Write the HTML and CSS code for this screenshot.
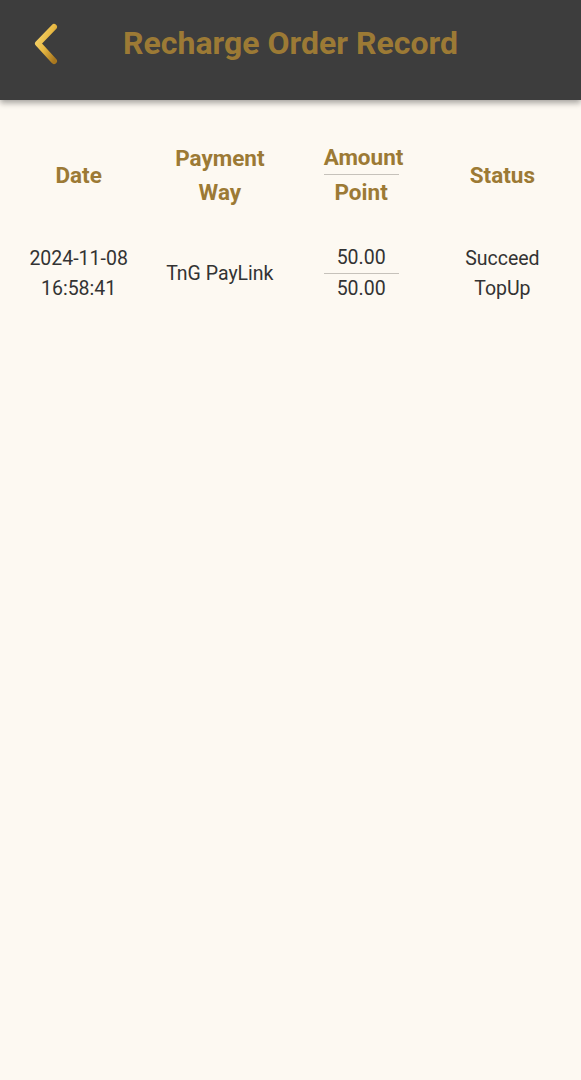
FILE: index.html
```html
<!DOCTYPE html>
<html>
<head>
<meta charset="utf-8">
<link rel="stylesheet" href="styles.css">
</head>
<body>
<header class="topbar">
  <a class="back" href="#">
    <svg width="30" height="44" viewBox="0 0 30 44">
      <defs>
        <linearGradient id="g" x1="0" y1="0" x2="1" y2="1">
          <stop offset="0" stop-color="#f7d873"/>
          <stop offset="0.5" stop-color="#e8b943"/>
          <stop offset="1" stop-color="#a8771f"/>
        </linearGradient>
      </defs>
      <polyline points="22,5 6,21.5 22,39" fill="none" stroke="url(#g)" stroke-width="6" stroke-linecap="round" stroke-linejoin="round"/>
    </svg>
  </a>
  <h1 class="title">Recharge Order Record</h1>
  <span class="spacer"></span>
</header>
<main class="content">
  <div class="table">
    <div class="row head">
      <div class="cell">Date</div>
      <div class="cell">Payment<br>Way</div>
      <div class="cell">
        <div class="pair"><span class="top">Amount</span><span>Point</span></div>
      </div>
      <div class="cell">Status</div>
    </div>
    <div class="row data">
      <div class="cell">2024-11-08<br>16:58:41</div>
      <div class="cell">TnG PayLink</div>
      <div class="cell">
        <div class="pair"><span class="top">50.00</span><span>50.00</span></div>
      </div>
      <div class="cell">Succeed<br>TopUp</div>
    </div>
  </div>
</main>
</body>
</html>
```

FILE: styles.css
```css
html, body {
  margin: 0;
  padding: 0;
  background: #fdf9f2;
  font-family: Roboto, "Liberation Sans", sans-serif;
}
.topbar {
  height: 100px;
  background: #3d3d3d;
  display: grid;
  grid-template-columns: 80px 1fr 80px;
  align-items: center;
  box-shadow: 0 3px 6px rgba(0,0,0,0.35);
}
.back {
  display: flex;
  padding-left: 32px;
  padding-bottom: 12px;
}
.title {
  margin: 0;
  text-align: center;
  color: #9c7a35;
  font-size: 32px;
  font-weight: 700;
  padding-bottom: 14px;
}
.content {
  padding: 40px 8px 0;
}
.row {
  display: grid;
  grid-template-columns: repeat(4, 1fr);
  align-items: center;
}
.cell {
  text-align: center;
  display: flex;
  flex-direction: column;
  align-items: center;
}
.head {
  color: #9c7a35;
  font-weight: 700;
  font-size: 22.5px;
  line-height: 34px;
}
.data {
  margin-top: 34px;
  color: #333;
  font-size: 19.5px;
  line-height: 30px;
}
.pair {
  display: flex;
  flex-direction: column;
  width: 75px;
}
.pair .top {
  border-bottom: 1.5px solid #c6c2bb;
}
```
